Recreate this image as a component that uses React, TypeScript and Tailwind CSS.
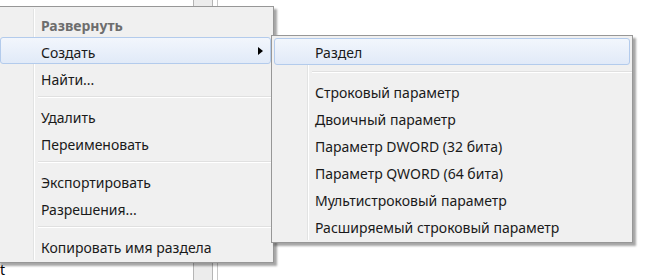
import React from "react";

type Row = { label: string; bold?: boolean; disabled?: boolean; active?: boolean; arrow?: boolean } | "sep";

// пункты главного контекстного меню
const mainItems: Row[] = [
  { label: "Развернуть", bold: true, disabled: true },
  { label: "Создать", active: true, arrow: true },
  { label: "Найти..." },
  "sep",
  { label: "Удалить" },
  { label: "Переименовать" },
  "sep",
  { label: "Экспортировать" },
  { label: "Разрешения..." },
  "sep",
  { label: "Копировать имя раздела" },
];

// подменю "Создать"
const subItems: Row[] = [
  { label: "Раздел", active: true },
  "sep",
  { label: "Строковый параметр" },
  { label: "Двоичный параметр" },
  { label: "Параметр DWORD (32 бита)" },
  { label: "Параметр QWORD (64 бита)" },
  { label: "Мультистроковый параметр" },
  { label: "Расширяемый строковый параметр" },
];

function MenuRows({ items, sub }: { items: Row[]; sub?: boolean }) {
  return (
    <div className="flex flex-col">
      {items.map((it, i) =>
        it === "sep" ? (
          <div key={i} className={`${sub ? "h-[13px]" : "h-[11px]"} flex items-center pl-[40px]`}>
            <div className="w-full h-px bg-[#e0e0e0] border-b border-white box-content" />
          </div>
        ) : (
          <div
            key={i}
            className={`relative h-[27px] flex items-center ${sub ? "pt-[2px]" : "pt-[3px]"} mx-[2px] rounded-[3px] border ${
              it.active
                ? "border-[#b3cbec] bg-gradient-to-b from-[#f2f6fc] to-[#e1eaf8]"
                : "border-transparent"
            }`}
          >
            <span
              className={`pl-[40px] whitespace-nowrap ${it.bold ? "font-bold" : ""} ${
                it.disabled ? "text-[#6d6d6d]" : "text-[#1a1a1a]"
              }`}
            >
              {it.label}
            </span>
            {it.arrow && (
              <span className="absolute right-[7px] top-[9px] w-0 h-0 border-y-[4.5px] border-y-transparent border-l-[5px] border-l-black" />
            )}
          </div>
        )
      )}
    </div>
  );
}

function Menu({ items, className, sub }: { items: Row[]; className: string; sub?: boolean }) {
  return (
    <div
      className={`absolute bg-[#f0f0f0] border border-[#979797] shadow-[3px_3px_2px_rgba(0,0,0,0.35)] ${className}`}
    >
      {/* полоса под иконки слева */}
      <div className="absolute left-[35px] top-[2px] bottom-[2px] w-px bg-[#e2e3e3] border-r border-white box-content" />
      <MenuRows items={items} sub={sub} />
    </div>
  );
}

export default function App() {
  return (
    <div
      className="relative w-[670px] h-[280px] bg-white overflow-hidden text-[14px]"
      style={{ fontFamily: '"Noto Sans", "Open Sans", sans-serif' }}
    >
      {/* окно редактора реестра под меню */}
      <div className="flex h-full">
        <div className="w-[193px] flex flex-col justify-end pb-[3px]">
          <span className="leading-none text-black">t</span>
        </div>
        <div className="w-[20px] h-full bg-[#ececec] border-x border-[#b5b5b5]" />
        <div className="w-[5px] h-full border-r border-[#c8c8c8]" />
      </div>

      <Menu items={mainItems} className="left-[-3px] top-[6px] w-[277px] py-[3px]" />
      <Menu items={subItems} className="left-[271px] top-[35px] w-[362px] py-[2px]" sub />
    </div>
  );
}
